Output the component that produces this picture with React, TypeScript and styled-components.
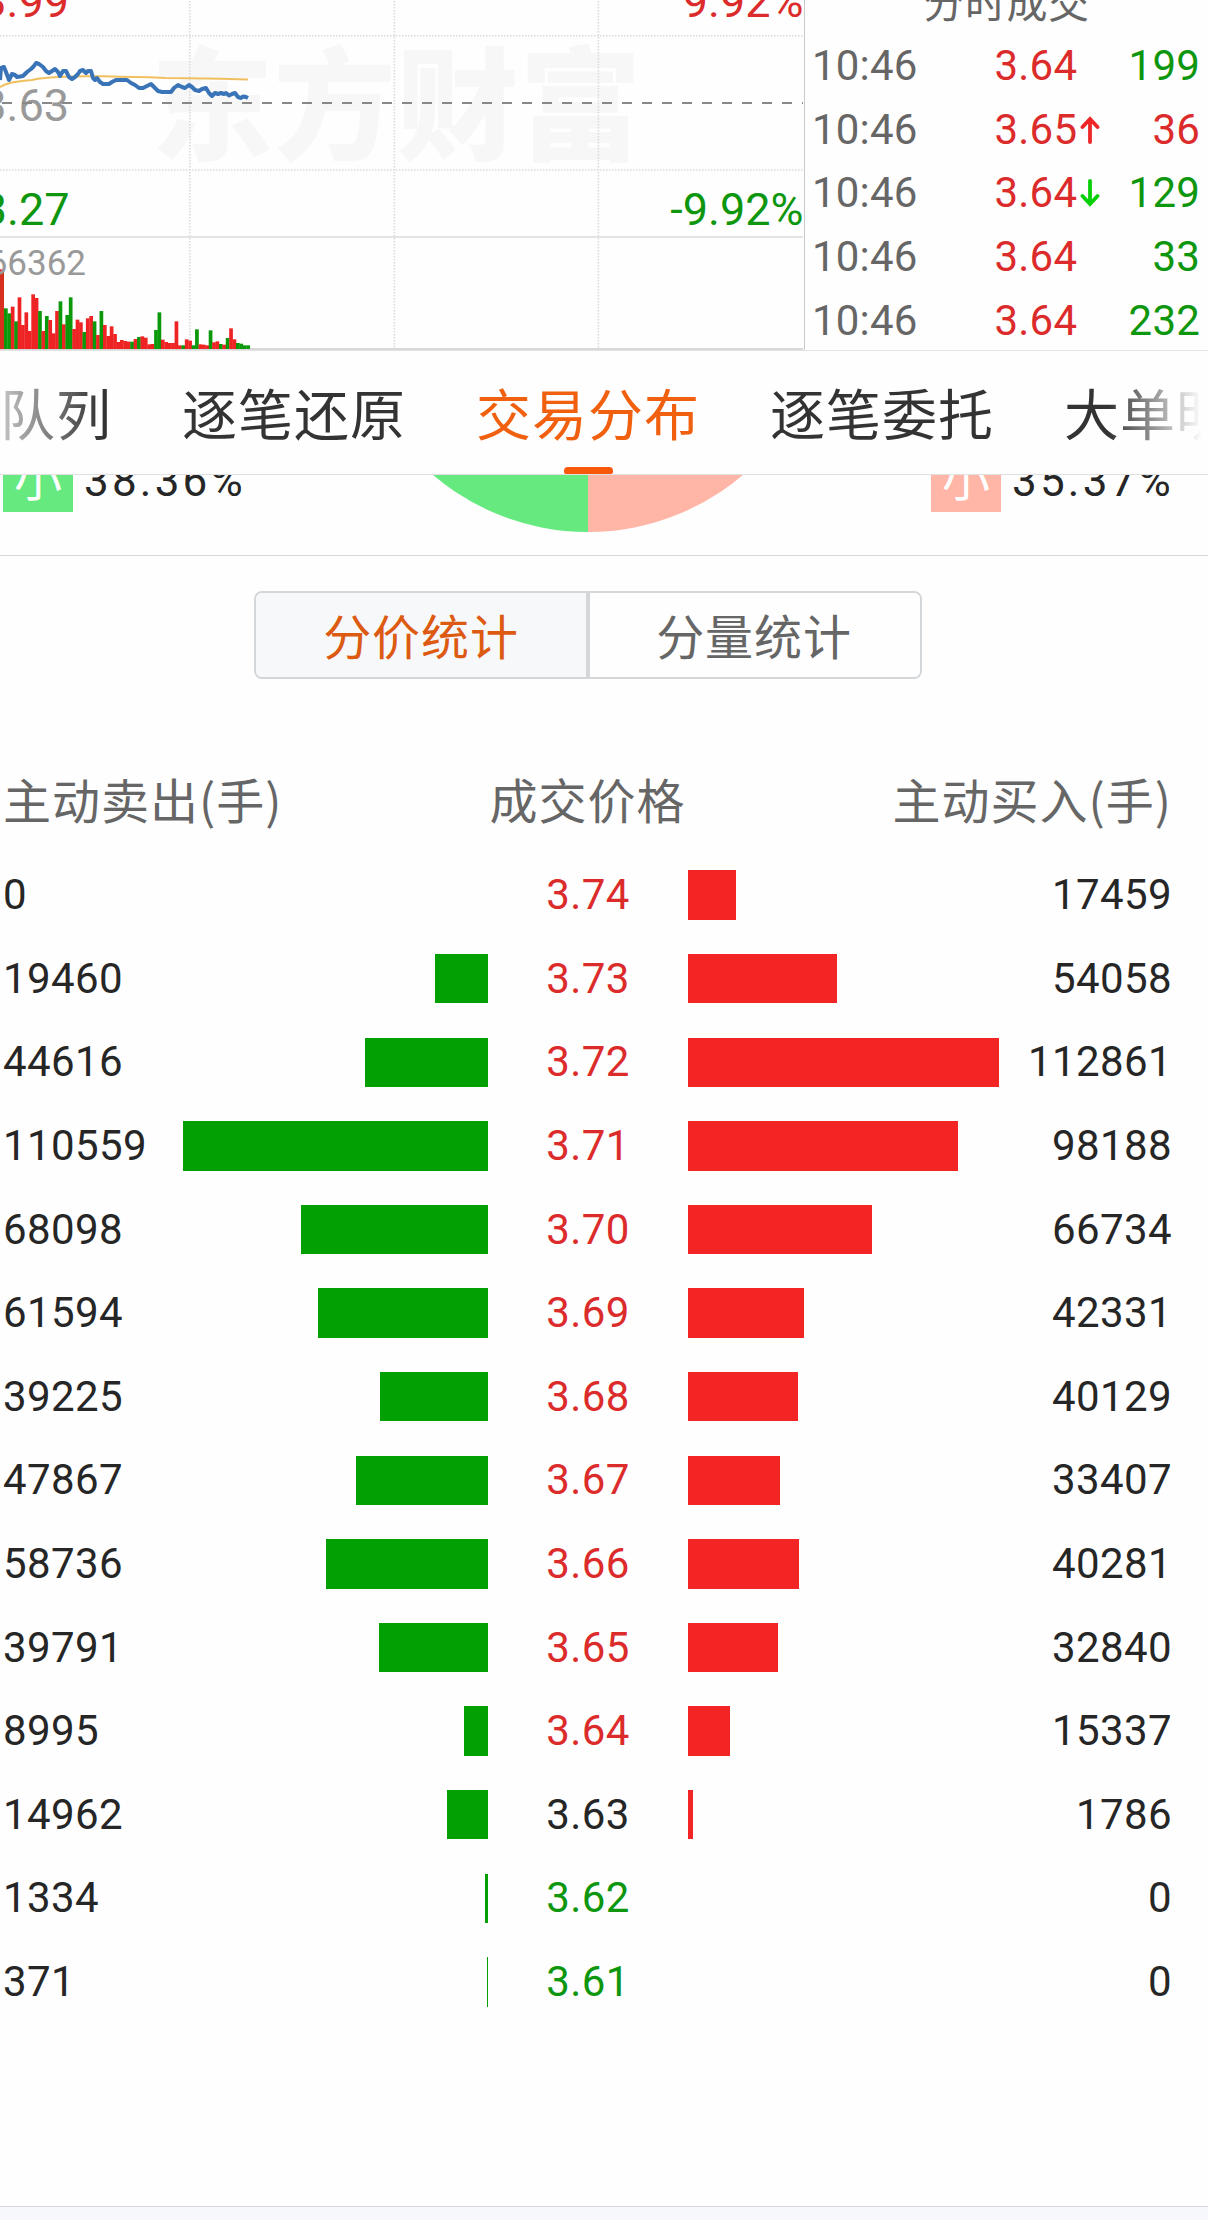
import React from 'react';
import styled, { createGlobalStyle } from 'styled-components';

const RED = '#dc2b2b';
const GREEN = '#0f960f';
const CJK = '"Noto Sans CJK SC", sans-serif';

const GlobalStyle = createGlobalStyle`
  html, body { margin: 0; padding: 0; background: #fefefe; }
  body { width: 1208px; height: 2220px; overflow: hidden; font-family: Roboto, ${CJK}; }
  * { box-sizing: border-box; }
`;

const Page = styled.main`
  display: flex;
  flex-direction: column;
  width: 1208px;
  height: 2220px;
  overflow: hidden;
  background: #fefefe;
`;

const Market = styled.section`
  display: flex;
  height: 351px;
  border-bottom: 1px solid #e2e2e2;
`;

const ChartPane = styled.div`
  width: 805px;
  height: 350px;
  border-right: 1px solid #c9c9c9;
  overflow: hidden;
  svg { display: block; }
`;

const Ticks = styled.div`
  flex: 1;
  height: 350px;
  overflow: hidden;
`;

const TicksTitle = styled.div`
  height: 34px;
  display: flex;
  align-items: flex-end;
  justify-content: center;
  font: 400 41px/60px ${CJK};
  letter-spacing: 0.6px;
  color: #666;
  padding-bottom: 4px;
`;

const TickRow = styled.div`
  display: grid;
  grid-template-columns: 182.5px 85.5px 22px 1fr;
  align-items: center;
  height: 63.75px;
  padding: 0 8px 0 7px;
  font-size: 42px;
  line-height: 62px;
  letter-spacing: 0.2px;
`;

const Time = styled.span`color: #666;`;
const Price = styled.span`color: ${RED};`;
const Volume = styled.span<{ $up?: boolean }>`
  color: ${p => (p.$up ? RED : GREEN)};
  text-align: right;
`;

const TabBar = styled.nav`
  position: relative;
  display: flex;
  gap: 70px;
  width: 1208px;
  height: 124px;
  overflow: hidden;
  border-bottom: 1px solid #e0e0e0;
  &::before, &::after {
    content: '';
    position: absolute;
    top: 0;
    bottom: 0;
    width: 100px;
    pointer-events: none;
  }
  &::before { left: 0; background: linear-gradient(90deg, rgba(254,254,254,0.72) 0%, rgba(254,254,254,0) 100%); }
  &::after { right: 0; background: linear-gradient(270deg, #fefefe 6%, rgba(254,254,254,0) 100%); }
`;

const Tab = styled.div<{ $active?: boolean }>`
  display: flex;
  flex: none;
  flex-direction: column;
  align-items: center;
  justify-content: space-between;
  color: ${p => (p.$active ? '#f0600f' : '#333')};
  font: 400 55px/123px ${CJK};
  letter-spacing: 1px;
  white-space: nowrap;
  height: 123px;
`;

const TabLabel = styled.span`
  height: 114px;
  line-height: 122px;
  margin-top: -1.5px;
`;

const Underline = styled.i`
  width: 49px;
  height: 7px;
  border-radius: 4px 4px 2px 2px;
  background: #f95709;
`;

const SummaryWrap = styled.div`
  border-bottom: 1px solid #d8d8d8;
  height: 81px;
  overflow: hidden;
`;

const Summary = styled.section`
  display: flex;
  justify-content: space-between;
  width: 1173px;
  height: 80px;
  padding-left: 3px;
`;

const Share = styled.div`
  display: flex;
  flex: none;
  gap: 11px;
  width: 242px;
  height: 70px;
  margin-top: -33px;
`;

const ShareValue = styled.span`
  padding-top: 4px;
  font-size: 44px;
  line-height: 70px;
  letter-spacing: 3.2px;
  white-space: nowrap;
  color: #262626;
`;

const SizeTag = styled.span<{ $tone: string }>`
  flex: none;
  width: 70px;
  height: 70px;
  background: ${p => p.$tone};
  color: #fff;
  font: 400 48px/66px ${CJK};
  text-align: center;
`;

const Segments = styled.div`
  display: flex;
  align-self: flex-start;
  width: 668px;
  height: 88px;
  margin: 35px 0 0 254px;
  border: 2px solid #d3d7da;
  border-radius: 8px;
  overflow: hidden;
`;

const Segment = styled.button<{ $active?: boolean }>`
  flex: ${p => (p.$active ? '0 0 330px' : '1')};
  padding: 0 ${p => (p.$active ? '0' : '2px')} 2px 0;
  border: 0;
  border-left: ${p => (p.$active ? '0' : '4px solid #d3d7da')};
  background: ${p => (p.$active ? '#f6f8fa' : '#fefefe')};
  color: ${p => (p.$active ? '#dd5a12' : '#666')};
  font: 400 48px/82px ${CJK};
  letter-spacing: 0.9px;
`;

const TableHead = styled.div`
  display: grid;
  grid-template-columns: 1fr 1fr 1fr;
  width: 1175px;
  height: 70px;
  margin-top: 84px;
  padding: 0 3px;
  font: 400 48px/70px ${CJK};
  letter-spacing: 1px;
  color: #666;
  span:nth-child(2) { text-align: center; }
  span:nth-child(3) { text-align: right; }
`;

const TableBody = styled.div`
  margin-top: 20.4px;
`;

const Row = styled.div`
  display: grid;
  grid-template-columns: 160px 325.4px 199.2px 325px 159.4px;
  align-items: center;
  width: 1175px;
  height: 83.6px;
  padding-left: 3px;
  font-size: 42px;
  line-height: 60px;
  letter-spacing: 0.4px;
  color: #262626;
`;

const Cell = styled.span<{ $tone?: string; $align?: string }>`
  color: ${p => p.$tone || '#262626'};
  text-align: ${p => p.$align || 'left'};
`;

const Bar = styled.i<{ $buy?: boolean }>`
  height: 49.4px;
  justify-self: ${p => (p.$buy ? 'start' : 'end')};
  background: ${p => (p.$buy ? '#f32424' : '#02a002')};
`;

const Footer = styled.footer`
  height: 14px;
  margin-top: auto;
  flex: none;
  border-top: 1px solid #d5d9de;
  background: #f6f8fb;
`;

// Direction letter, then the top of the bar in thirds of a pixel below y = 180.
const volumes = (
  'g385 g400 r380 g424 r352 r435 r397 r453 r343 r354 g393 r453 g408 r420 r460 r393 g364 r433 g405 g352 ' +
  'r447 r419 r427 g456 r415 r408 g424 r465 g393 r435 r468 r439 r462 r486 r480 r483 r485 g485 r477 g471 ' +
  'r469 r473 r493 r492 g450 g397 r479 r486 r489 r489 r424 r496 g496 r478 r482 g496 g448 r493 r494 r496 ' +
  'g451 r487 r484 g492 r494 g474 r445 r478 g489 g491 g496 g496'
).split(' ').map(v => ({ up: v[0] === 'r', top: 180 + Number(v.slice(1)) / 3 }));

const priceLine =
  '0,80 1,68 4,67 6,72 9,80 12,74 15,75 17,77 23,76 27,72 31,69 34,66 36,63 39,64 43,67 46,71 49,73 52,71 55,69 58,72 60,76 63,71 66,71 69,77 72,79 75,77 78,74 80,71 83,70 86,73 88,71 91,71 93,78 95,80 97,78 100,82 103,84 109,84 112,82 116,80 127,80 131,83 135,85 139,88 143,88 147,86 151,84 154,87 158,91 162,92 171,92 174,88 178,85 182,87 185,88 189,85 192,87 195,90 199,91 202,89 206,88 209,93 212,96 215,93 218,94 221,93 224,94 226,93 229,95.5 232,94 235,93 238,97 241,98 243,96.5 246,97 248,98';
const averageLine =
  '0,87 5,84.5 12,82.5 22,81 32,80 38,78.7 50,77.4 65,76.7 85,76.2 105,76.3 120,76.8 150,77.2 165,77.9 189,78.2 220,78.8 248,79.5';

const Chart = () => (
  <svg width="804" height="350" viewBox="0 0 804 350" fontFamily="Roboto, sans-serif">
    <text x="151" y="150" fontFamily='"Noto Sans CJK SC", sans-serif' fontWeight="900" fontSize="122" letterSpacing="0.8" fill="#f7f7f7">东方财富</text>
    <g stroke="#dadada" strokeWidth="1.6" strokeDasharray="1.5 1.5">
      <path d="M0 35.8H803M0 170H803" />
      <path d="M189.8 1V348M394.4 1V348M598.4 1V348" />
    </g>
    <path d="M0 237H803" stroke="#e3e3e3" strokeWidth="2" />
    <path d="M0 349H803" stroke="#d8d8d8" strokeWidth="2" />
    <g fontSize="45">
      <text x="69" y="16.7" textAnchor="end" fill={RED}>3.99</text>
      <text x="69" y="120.5" textAnchor="end" fill="#999">3.63</text>
      <text x="69.5" y="225" textAnchor="end" fill={GREEN}>3.27</text>
      <text x="803.5" y="16.7" textAnchor="end" fill={RED}>9.92%</text>
      <text x="803.5" y="225" textAnchor="end" fill={GREEN}>-9.92%</text>
    </g>
    <path d="M2 103H803" stroke="#888" strokeWidth="2" strokeDasharray="10 10" />
    <polyline points={averageLine} fill="none" stroke="#f0c060" strokeWidth="2" />
    <polyline points={priceLine} fill="none" stroke="#3a74b8" strokeWidth="4" strokeLinejoin="round" />
    <rect x="0" y="269.3" width="4" height="79.7" fill="#d8301f" />
    {volumes.map((v, i) => (
      <rect key={i} x={4 + i * 3.412} y={v.top} width="3.7" height={349 - v.top} fill={v.up ? '#ee2424' : '#0b980b'} />
    ))}
    <text x="86" y="275" fontSize="35" textAnchor="end" fill="#999">66362</text>
  </svg>
);

const Arrow = ({ up }: { up?: boolean }) => (
  <svg width="20" height="28" viewBox="0 0 20 28" fill="none" stroke={up ? '#ee2626' : '#08d008'} strokeWidth="3.8" strokeLinecap="round">
    {up ? <path d="M10 26V4M2.5 11 10 3l7.5 8" /> : <path d="M10 2v22M2.5 17l7.5 8 7.5-8" />}
  </svg>
);

const ticks = [
  { price: '3.64', volume: 199 },
  { price: '3.65', volume: 36, move: 'up' },
  { price: '3.64', volume: 129, move: 'down' },
  { price: '3.64', volume: 33 },
  { price: '3.64', volume: 232 },
];

const levels: [number, string, number][] = [
  [0, '3.74', 17459],
  [19460, '3.73', 54058],
  [44616, '3.72', 112861],
  [110559, '3.71', 98188],
  [68098, '3.70', 66734],
  [61594, '3.69', 42331],
  [39225, '3.68', 40129],
  [47867, '3.67', 33407],
  [58736, '3.66', 40281],
  [39791, '3.65', 32840],
  [8995, '3.64', 15337],
  [14962, '3.63', 1786],
  [1334, '3.62', 0],
  [371, '3.61', 0],
];

const PREV_CLOSE = 3.63;
const PX_PER_LOT = 0.0027585;
const tone = (price: number) => (price > PREV_CLOSE ? RED : price < PREV_CLOSE ? GREEN : '#262626');

export default function App() {
  return (
    <Page>
      <GlobalStyle />
      <Market>
        <ChartPane><Chart /></ChartPane>
        <Ticks>
          <TicksTitle>分时成交</TicksTitle>
          {ticks.map((t, i) => (
            <TickRow key={i}>
              <Time>10:46</Time>
              <Price>{t.price}</Price>
              <span>{t.move && <Arrow up={t.move === 'up'} />}</span>
              <Volume $up={t.move === 'up'}>{t.volume}</Volume>
            </TickRow>
          ))}
        </Ticks>
      </Market>
      <TabBar>
        <Tab><TabLabel>队列</TabLabel></Tab>
        <Tab><TabLabel>逐笔还原</TabLabel></Tab>
        <Tab $active><TabLabel>交易分布</TabLabel><Underline /></Tab>
        <Tab><TabLabel>逐笔委托</TabLabel></Tab>
        <Tab><TabLabel>大单明细</TabLabel></Tab>
      </TabBar>
      <SummaryWrap>
        <Summary>
          <Share><SizeTag $tone="#66ea80">小</SizeTag><ShareValue>38.36%</ShareValue></Share>
          <svg width="320" height="58" viewBox="428 475 320 58">
            <path d="M588 293V532A239 239 0 0 1 349 293Z" fill="#66ea80" />
            <path d="M588 293V532A239 239 0 0 0 827 293Z" fill="#ffb6a6" />
          </svg>
          <Share><SizeTag $tone="#ffb6a6">小</SizeTag><ShareValue>35.37%</ShareValue></Share>
        </Summary>
      </SummaryWrap>
      <Segments>
        <Segment $active>分价统计</Segment>
        <Segment>分量统计</Segment>
      </Segments>
      <TableHead>
        <span>主动卖出(手)</span>
        <span>成交价格</span>
        <span>主动买入(手)</span>
      </TableHead>
      <TableBody>
        {levels.map(([sell, price, buy]) => (
          <Row key={price}>
            <Cell>{sell}</Cell>
            <Bar style={{ width: sell * PX_PER_LOT }} />
            <Cell $align="center" $tone={tone(Number(price))}>{price}</Cell>
            <Bar $buy style={{ width: buy * PX_PER_LOT }} />
            <Cell $align="right">{buy}</Cell>
          </Row>
        ))}
      </TableBody>
      <Footer />
    </Page>
  );
}
